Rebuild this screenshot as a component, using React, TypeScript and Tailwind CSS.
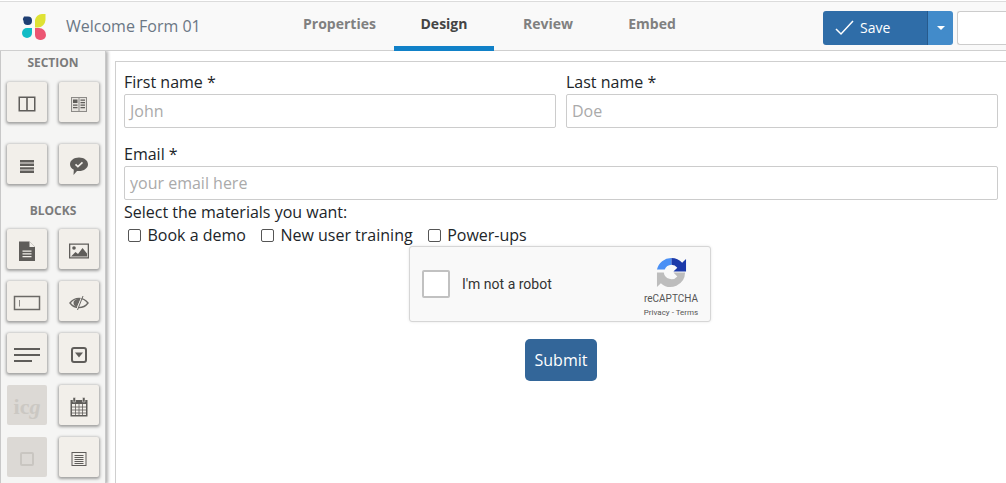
import React from 'react';

const ACCENT = 'bg-[#2f6da8]';

const Logo = () => (
  <svg width="28" height="28" viewBox="0 0 28 28">
    <path d="M4 3.500 h4 a4 4 0 0 1 4 4 v0.500 a4 4 0 0 1 -4 4 h-0.500 a4 4 0 0 1 -4 -4 a4 4 0 0 1 0.500 -4.500 z" fill="#1f3f73" />
    <path d="M15 11 V7 a7 7 0 0 1 7 -6 h3.500 v6 a8 8 0 0 1 -7.500 7.500 h-3 z" fill="#dfe234" />
    <path d="M7 15 h5 v5 a5 5 0 0 1 -5 5 a5 5 0 0 1 -5 -5 a5 5 0 0 1 5 -5 z" fill="#12bcc6" />
    <path d="M15 15 h4 a7 7 0 0 1 7 7 a5 5 0 0 1 -5 5 h-1 a5 5 0 0 1 -5 -5 z" fill="#ec5673" />
  </svg>
);

const I = ({ children }: { children: React.ReactNode }) => (
  <svg width="22" height="22" viewBox="0 0 22 22" fill="#5f5d5a" stroke="none">
    {children}
  </svg>
);

type Tool = { key: string; disabled?: boolean; icon: React.ReactNode };

const tools: Tool[][] = [
  [
    { key: 'two-col', icon: <I><path d="M2.500 3.500h17v15h-17z M4 5v12h6.200V5z M11.800 5v12H18V5z" fillRule="evenodd" /></I> },
    { key: 'article', icon: <I><path d="M3 4h16v15H3z" fill="#8d8b88" /><path d="M4 5h6.500v13H4z M11.500 5H18v13h-6.500z" fill="#e6e3de" /><path d="M5 6.500h4.500v3.500H5z M5 11.500h4.500v1.300H5z M5 14h4.500v1.300H5z M12.500 6.500H17v1.300h-4.500z M12.500 9H17v1.300h-4.500z M12.500 11.500H17v1.300h-4.500z M12.500 14H17v1.300h-4.500z" /></I> },
  ],
  [
    { key: 'rows', icon: <I><path d="M4 5h14v2.400H4z M4 8.600h14V11H4z M4 12.200h14v2.400H4z M4 15.600h14V18H4z" /></I> },
    { key: 'comment', icon: <I><path d="M11 2.500c5 0 9 2.900 9 6.800s-4 6.800-9 6.800c-.7 0-1.300 0-2-.2L5.500 20l.3-5.200C3.500 13.600 2 11.600 2 9.300 2 5.400 6 2.500 11 2.500z" /><path d="M7.500 9.300l2.400 2.300 4.600-4.300" fill="none" stroke="#f2efea" strokeWidth="1.600" /></I> },
  ],
];

const blocks: Tool[][] = [
  [
    { key: 'doc', icon: <I><path d="M3 1.500h10.500l5.500 5.500v14H3z" /><path d="M13.500 1.500V7H19z" fill="#f2efea" /><path d="M6.500 10.500h9v1.300h-9z M6.500 13.200h9v1.300h-9z M6.500 15.900h9v1.300h-9z" fill="#f2efea" /></I> },
    { key: 'image', icon: <svg width="22" height="18" viewBox="0 0 22 18" fill="#5f5d5a"><path d="M1 1.500h20v15H1z M2.300 2.800v12.400h17.400V2.800z" fillRule="evenodd" /><circle cx="6" cy="6" r="1.800" /><path d="M3 14.500l4.500-4.500 2.500 2 4.500-6 4.500 5.500v3z" /></svg> },
  ],
  [
    { key: 'input', icon: <svg width="28" height="16" viewBox="0 0 28 16"><rect x="1.500" y="1.500" width="25" height="13" fill="none" stroke="#6b6966" strokeWidth="1.500" /><path d="M6.500 5v6.500" stroke="#8a8885" strokeWidth="1" /></svg> },
    { key: 'hidden', icon: <svg width="20" height="16" viewBox="0 0 20 16" fill="none" stroke="#6b6966"><path d="M1 8c2.300-3 5.500-4.600 9-4.600s6.700 1.600 9 4.600c-2.300 3-5.500 4.600-9 4.600S3.300 11 1 8z" strokeWidth="1.400" /><path d="M4.500 8c0-2.500 2-4.300 7.500-4.500L8 12C5.800 11.500 4.500 10 4.500 8z" fill="#6b6966" stroke="none" /><path d="M13 1L7.500 15" stroke="#f2efea" strokeWidth="1" /><path d="M14 1L8.500 15" strokeWidth="1" /></svg> },
  ],
  [
    { key: 'lines', icon: <svg width="28" height="18" viewBox="0 0 28 18" fill="#5f5d5a"><path d="M1 2h26v2H1z M1 8h26v2H1z M1 14h18v2H1z" /></svg> },
    { key: 'select', icon: <svg width="18" height="18" viewBox="0 0 18 18"><rect x="2" y="2" width="14" height="14" rx="2" fill="none" stroke="#5f5d5a" strokeWidth="2" /><path d="M5 6.500h8L9 11.500z" fill="#5f5d5a" /></svg> },
  ],
  [
    { key: 'ics', disabled: true, icon: <span className="font-['Liberation_Serif',serif] text-[22px] font-bold text-[#cbc8c3] leading-none">ic<i>g</i></span> },
    { key: 'calendar', icon: <svg width="20" height="22" viewBox="0 0 20 22"><path d="M1.500 4h17v16.500h-17z" fill="#5f5d5a" /><path d="M4 1.500h2.500v4.500H4z M13.500 1.500H16v4.500h-2.500z" fill="#5f5d5a" stroke="#f2efea" strokeWidth="0.500" /><path d="M3 8h14v11H3z" fill="#f2efea" /><path d="M3 11h14 M3 14h14 M3 17h14 M6.500 8v11 M10 8v11 M13.500 8v11" stroke="#5f5d5a" strokeWidth="0.800" /></svg> },
  ],
  [
    { key: 'checkbox', disabled: true, icon: <span className="block w-[14px] h-[14px] rounded-[2px] border-2 border-[#c9c6c1]" /> },
    { key: 'notes', icon: <svg width="16" height="16" viewBox="0 0 16 16" fill="none" stroke="#5f5d5a"><rect x="1" y="1.500" width="14" height="13" strokeWidth="1" /><path d="M3.500 4.500h9 M3.500 6.500h9 M3.500 8.500h9 M3.500 10.500h9 M3.500 12.500h9" strokeWidth="1.100" /></svg> },
  ],
];

const ToolButton = ({ icon, disabled }: { icon: React.ReactNode; disabled?: boolean }) => (
  <div
    className={
      disabled
        ? 'w-10 h-10 pt-1 flex items-center justify-center bg-[#dcd9d5] rounded-[2px]'
        : 'w-10 h-10 pt-1 flex items-center justify-center bg-[#f2efea] rounded-[2px] shadow-[0_1px_3px_1px_rgba(0,0,0,0.35)]'
    }
  >
    {icon}
  </div>
);

const Sidebar = () => (
  <aside className="w-[106px] shrink-0 h-[433px] overflow-hidden bg-[#f5f5f4] border-l border-[#c8c8c8] border-r shadow-[2px_0_3px_rgba(0,0,0,0.3)] pl-[6px] font-['Open_Sans',sans-serif]">
    <div className="w-[92px] text-center text-[12px] font-bold text-[#7b7b7b] leading-[16px] pt-[4px]">SECTION</div>
    <div className="flex flex-col gap-[22px] mt-[11px]">
      {tools.map((row, i) => (
        <div key={i} className="flex gap-3">
          {row.map((t) => <ToolButton key={t.key} icon={t.icon} disabled={t.disabled} />)}
        </div>
      ))}
    </div>
    <div className="w-[92px] text-center text-[12px] font-bold text-[#7b7b7b] leading-[16px] mt-[19px]">BLOCKS</div>
    <div className="flex flex-col gap-3 mt-[10px]">
      {blocks.map((row, i) => (
        <div key={i} className="flex gap-3">
          {row.map((t) => <ToolButton key={t.key} icon={t.icon} disabled={t.disabled} />)}
        </div>
      ))}
    </div>
  </aside>
);

const Field = ({ label, placeholder, className }: { label: string; placeholder: string; className?: string }) => (
  <div className={className}>
    <label className="block text-[16px] leading-[24px] text-[#212529]">{label}</label>
    <div className="h-[34px] border border-[#ccc] rounded-[2px] px-[5px] text-[16px] leading-[32px] text-[#aaa]">{placeholder}</div>
  </div>
);

const Check = ({ label }: { label: string }) => (
  <span className="flex items-center">
    <span className="w-[13px] h-[13px] border border-[#555] rounded-[2px] bg-white mr-[6.5px]" />
    <span>{label}</span>
  </span>
);

const Captcha = () => (
  <div className="w-[302px] h-[76px] mx-auto bg-[#f9f9f9] border border-[#d6d6d6] rounded-[3px] shadow-[0_0_3px_rgba(0,0,0,0.1)] flex items-center font-['Roboto',sans-serif] relative">
    <span className="ml-[12px] w-[28px] h-[28px] bg-white border-2 border-[#c1c1c1] rounded-[2px]" />
    <span className="ml-[12px] text-[14px] text-[#333]">I'm not a robot</span>
    <div className="absolute right-[11px] top-[10px] w-[56px] flex flex-col items-center">
      <svg width="31" height="31" viewBox="0 0 32 32">
        <path d="M1 13 A15 15 0 0 1 16 1 V8 A8 8 0 0 0 9 13 L13 13 L1 13 z" fill="#4a90f5" />
        <path d="M16 1 A15 15 0 0 1 27 6 L31 2 V15 H18 L22 11 A8 8 0 0 0 16 8 z" fill="#1c3aa9" />
        <path d="M1 16 H8 A8 8 0 0 0 22 20 L18 16 H30 A15 15 0 0 1 5 27 L1 31 z" fill="#bdbdbd" />
      </svg>
      <span className="text-[10px] leading-[12px] text-[#555] mt-[5px] whitespace-nowrap">reCAPTCHA</span>
      <span className="text-[8px] leading-[10px] text-[#555] mt-[3px] whitespace-nowrap">Privacy - Terms</span>
    </div>
  </div>
);

const App = () => (
  <div className="w-[1006px] h-[483px] overflow-hidden bg-white font-['Open_Sans',sans-serif]">
    <header className="mt-[1px] h-[50px] bg-[#f9f9f9] border-t border-t-[#dcdcdc] border-b border-b-[#cfcfcf] flex items-center relative">
      <div className="ml-[20px] mt-[1px]"><Logo /></div>
      <div className="ml-[18px] text-[16px] text-[#6b7785] w-[200px]">Welcome Form 01</div>
      <nav className="ml-[19px] flex h-full text-[14px] font-bold text-[#808080]">
        <a className="w-[109px] flex justify-center pt-[11px]">Properties</a>
        <a className="w-[100px] flex justify-center pt-[11px] text-[#444] border-b-[5px] border-[#1181c8] h-[49px]">Design</a>
        <a className="w-[108px] flex justify-center pt-[11px]">Review</a>
        <a className="w-[100px] flex justify-center pt-[11px]">Embed</a>
      </nav>
      <div className="absolute left-[823px] top-[9px] flex items-stretch h-[34px]">
        <button className={`w-[105px] ${ACCENT} rounded-l-[3px] text-white text-[14px] flex items-center pl-[12px] border-r border-[#275a8c]`}>
          <svg width="20" height="16" viewBox="0 0 20 16" fill="none" stroke="white" strokeWidth="1.500"><path d="M1 9l5 5L18 1" /></svg>
          <span className="ml-[5px] -mt-[1px]">Save</span>
        </button>
        <button className="w-[25px] bg-[#428bca] rounded-r-[3px] flex items-center justify-center">
          <span className="w-0 h-0 border-x-[4px] border-x-transparent border-t-[4px] border-t-white" />
        </button>
        <div className="ml-[4px] w-[60px] bg-white border border-[#ccc] border-r-0 rounded-l-[3px]" />
      </div>
    </header>
    <div className="flex">
      <Sidebar />
      <main className="flex-1 mt-[10px] ml-[9px] border-l border-t border-[#cfcfcf] h-[422px] pl-[8px] pr-[8px] text-[16px] text-[#212529]">
        <div className="flex gap-[10px] pt-[8px]">
          <Field label="First name *" placeholder="John" className="flex-1" />
          <Field label="Last name *" placeholder="Doe" className="flex-1" />
        </div>
        <Field label="Email *" placeholder="your email here" className="mt-[14px]" />
        <div className="leading-[24px]">Select the materials you want:</div>
        <div className="flex gap-[15px] pl-[4px] leading-[22px]">
          <Check label="Book a demo" />
          <Check label="New user training" />
          <Check label="Power-ups" />
        </div>
        <div className="pr-[2px]"><Captcha /></div>
        <div className="flex justify-center mt-[17px]">
          <button className="w-[72px] h-[42px] bg-[#336699] text-white rounded-[5px] text-[16px]">Submit</button>
        </div>
      </main>
    </div>
  </div>
);

export default App;
